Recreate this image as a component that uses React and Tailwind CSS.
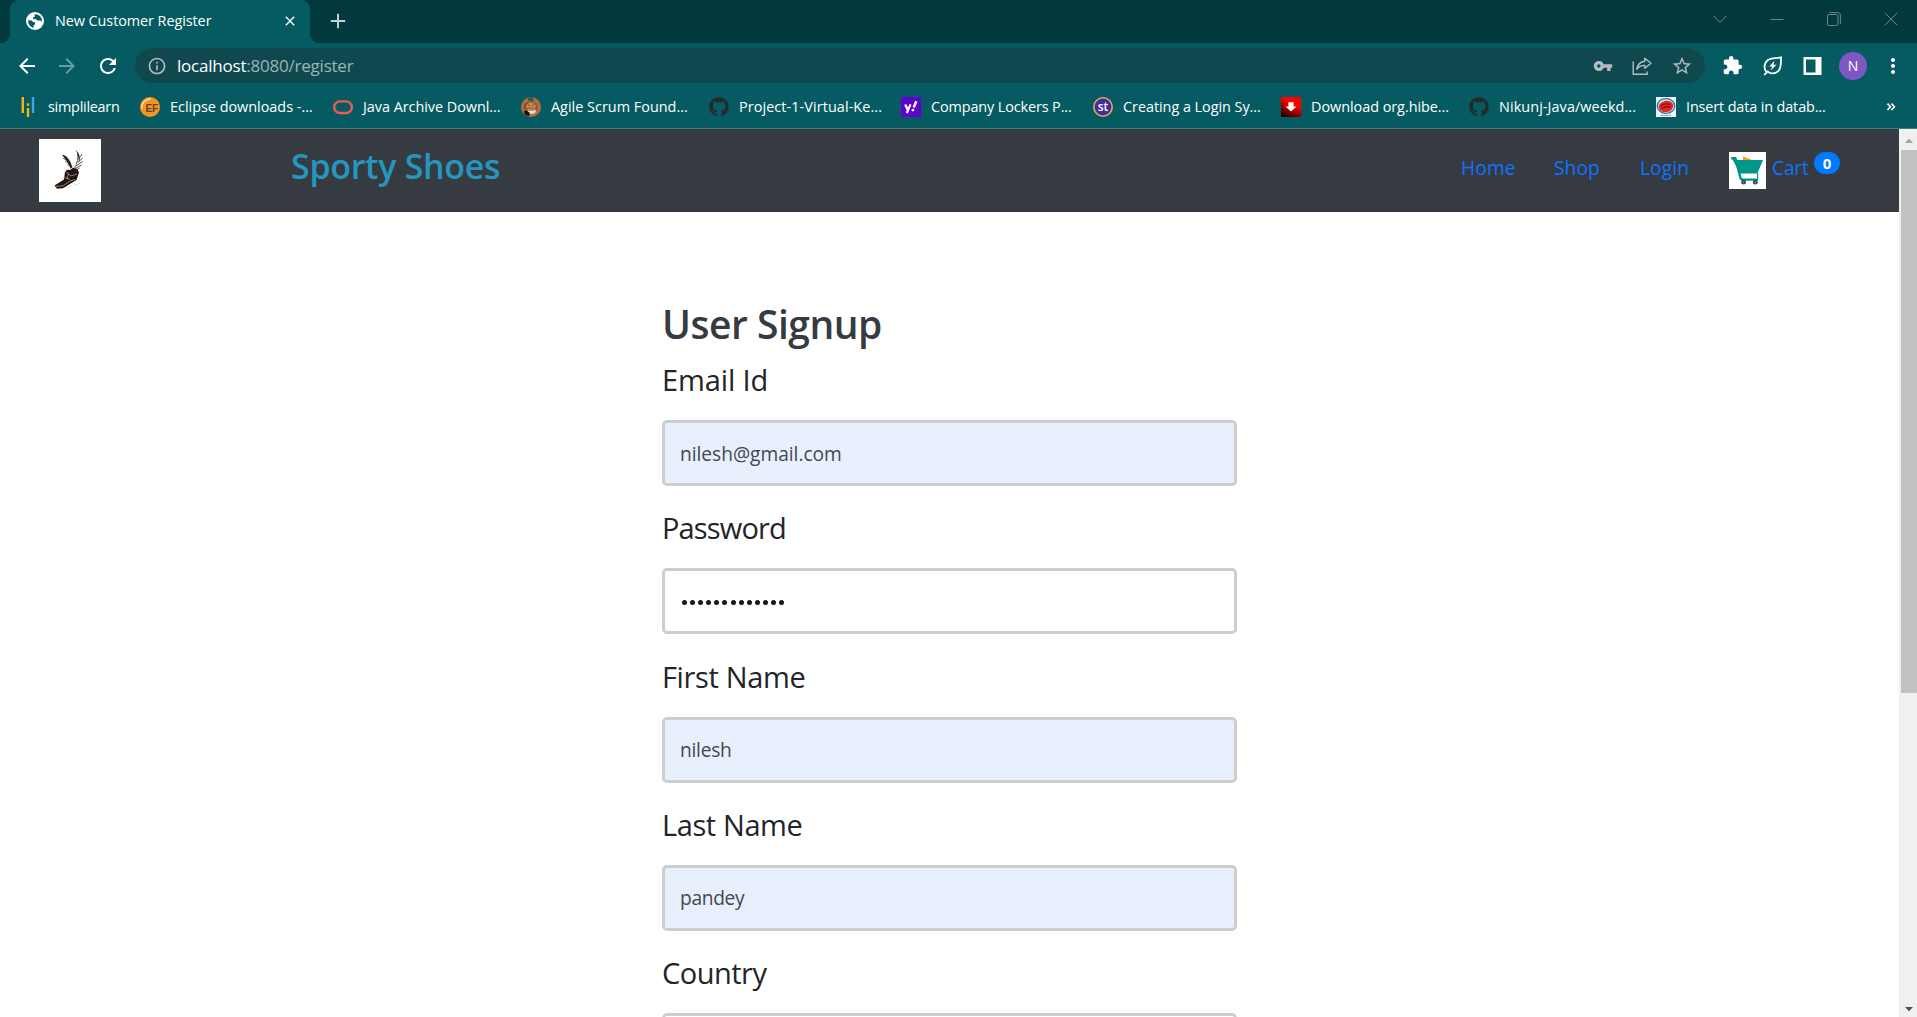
import React from 'react';
import { MdArrowBack, MdArrowForward, MdRefresh, MdInfoOutline, MdVpnKey, MdStarBorder, MdExtension, MdClose, MdMoreVert } from 'react-icons/md';
import { FaGithub } from 'react-icons/fa';

function GlobeIcon() {
  return (
    <svg viewBox="0 0 18 18" className="size-[18px]">
      <circle cx="9" cy="9" r="9" fill="#fff" />
      <path d="M2.2 8.2 L5.6 8.6 L7 10 L9 10.2 L9 12.6 L7.6 13.2 L7.5 16 A7.2 7.2 0 0 1 2.2 8.2Z" fill="#055b61" />
      <path d="M8.6 2.3 L11.4 2.5 A7 7 0 0 1 15.8 10 L14.2 8.6 L11.6 8.4 L10 7.2 L7.2 7 L7 5.4 L8.9 4.6Z" fill="#055b61" />
    </svg>
  );
}

function SimplilearnIcon() {
  return (
    <svg viewBox="0 0 20 20" className="size-5">
      <path d="M4.8 0V16M10 11V20" stroke="#f5b50a" strokeWidth="2.4" />
      <path d="M10 6.3V8.8" stroke="#f5b50a" strokeWidth="2.4" />
      <path d="M15 0V16" stroke="#38a9e8" strokeWidth="2.4" />
    </svg>
  );
}

function EclipseIcon() {
  return (
    <svg viewBox="0 0 20 20" className="size-5">
      <circle cx="10" cy="10" r="10" fill="#f7931e" />
      <path d="M2 12A8.3 8.3 0 0 1 11 2" stroke="#fdd7a6" strokeWidth="1.4" fill="none" />
      <text x="5.4" y="14.6" fontSize="10" fontWeight="700" fontFamily="Liberation Sans, sans-serif" fill="#5b4430">EF</text>
    </svg>
  );
}

function OracleIcon() {
  return (
    <svg viewBox="0 0 20 20" className="size-5">
      <rect x="1.2" y="4.4" width="17.6" height="11.6" rx="5.8" fill="none" stroke="#ef5a4c" strokeWidth="2.4" />
    </svg>
  );
}

function ScrumIcon() {
  return (
    <svg viewBox="0 0 20 20" className="size-5">
      <circle cx="10" cy="10" r="10" fill="#b06f3c" />
      <path d="M6.2 1.2L8.2 4.4H12.6L12 .6Q9 -.2 6.2 1.2Z" fill="#2d5a55" />
      <path d="M3.2 12.5C1.5 8 4 5.5 6.5 4.6L8 5.6L12.5 5.2L15 6.2C17 9 17 12 15.5 14Z" fill="#8d5430" />
      <ellipse cx="10" cy="9.4" rx="4.6" ry="3.6" fill="#c98a57" />
      <path d="M7 8.2H9M11 8.2H13M7.5 10.7Q10 12 12.6 10.7" stroke="#7a4526" strokeWidth="0.9" fill="none" />
      <path d="M5.5 12.8Q10 14.8 15 12.5L14 16.2L8.6 17.2Z" fill="#e9dfd2" />
      <path d="M2.8 14.4L5.5 13L9 16.2L8 19L4.4 18Z" fill="#15130f" />
    </svg>
  );
}

function YahooIcon() {
  return (
    <svg viewBox="0 0 20 20" className="size-5">
      <rect width="20" height="20" fill="#5f01d1" />
      <path d="M4.2 7.4L6.8 13M9.5 7.4L5.8 16" stroke="#fff" strokeWidth="2.3" />
      <path d="M15.3 4.3L12.7 10.6" stroke="#fff" strokeWidth="2.5" />
      <circle cx="11.9" cy="13.1" r="1.4" fill="#fff" />
    </svg>
  );
}

function StIcon() {
  return (
    <svg viewBox="0 0 20 20" className="size-5">
      <circle cx="10" cy="10" r="9.2" fill="#3f2da5" stroke="#eda84c" strokeWidth="1.6" />
      <text x="10" y="13.9" textAnchor="middle" fontSize="12" fontWeight="600" fontFamily="Open Sans, sans-serif" fill="#fff">st</text>
    </svg>
  );
}

function DownloadIcon() {
  return (
    <svg viewBox="0 0 20 20" className="size-5">
      <defs>
        <linearGradient id="redFade" x1="0.15" y1="1" x2="0.5" y2="0.3">
          <stop offset="0" stopColor="#120000" />
          <stop offset="1" stopColor="#ff0000" />
        </linearGradient>
      </defs>
      <rect width="20" height="20" fill="url(#redFade)" />
      <path d="M7.4 5.3H12.6V9.4H15.6L10 14.6L4.4 9.4H7.4Z" fill="#fff" />
    </svg>
  );
}

function RoundLogoIcon() {
  return (
    <svg viewBox="0 0 20 20" className="size-5">
      <rect width="20" height="20" fill="#f4f6fa" />
      <ellipse cx="10" cy="9" rx="8.8" ry="7.4" fill="#d7e6f5" stroke="#2a6fbd" strokeWidth="1.3" />
      <ellipse cx="10" cy="9.4" rx="7.4" ry="5.6" fill="#e02a1e" transform="rotate(-10 10 9.4)" />
      <path d="M5 9Q9 5.4 14 7.6M6 11.5Q10 8.6 14.6 10.4" stroke="#7b0f0c" strokeWidth="1.2" fill="none" />
      <path d="M4.5 18.4H15.5" stroke="#7a7f86" strokeWidth="1" strokeDasharray="2 0.7" />
    </svg>
  );
}

function ShareIcon() {
  return (
    <svg viewBox="0 0 20 20" className="size-5" fill="none" stroke="#b5bcbf" strokeWidth="1.4">
      <path d="M1.2 5.5V18.3H15.2V15.5" />
      <path d="M12.8 2.2L19 7.2L12.8 12.3V9.4Q8 9.2 4.8 13.2Q6 6 12.8 5.2Z" strokeLinejoin="round" />
    </svg>
  );
}

function LeafIcon() {
  return (
    <svg viewBox="0 0 20 20" className="size-5" fill="none" stroke="#fff" strokeWidth="1.8">
      <path d="M3.4 16.2C0.5 12.5 1 7 4.6 4.2C8 1.6 13.5 2.6 18 1.4C18 6 18.6 12 15 15.4C12 18 7.5 18.2 4.8 15.6L1.2 18.8" />
      <path d="M11.6 4.8L6.2 10.4H9.2L7.6 14.6L13.6 8.8H10.4Z" fill="#fff" stroke="none" />
    </svg>
  );
}

function ShoeLogo() {
  return (
    <svg viewBox="0 0 62 63" className="h-[63px] w-[62px] bg-white">
      <path d="M15.5 46.5L25 40.5L26 33L28 30.8L31 31L34 28.8L38.5 30L40 33.5L37.5 41L30 45.5L24 49.2L18 49.8Z" fill="#20140d" />
      <path d="M16.5 47.5L24 46.8L31 42L36 40.5M27 33L32 37L38 35M25.5 38.5L31 40.5M29.5 34.5L28 40" stroke="#a79d92" strokeWidth="0.8" fill="none" />
      <path d="M26 49Q36 46.5 42.5 43.6Q38 46.8 30 47.2Z" fill="#b5b1ac" />
      <path d="M22.8 15.6Q30.5 17 33.4 28.5L31.6 29.5Q28.5 22 22.8 15.6Z" fill="#2b1d14" />
      <path d="M24 19L28 21.6M26 22L30 24.6M28.5 25.5L32 27.4" stroke="#4d4239" strokeWidth="0.8" fill="none" />
      <path d="M36.6 10.6Q42.8 17 40 24Q39.8 16 36.6 10.6Z" fill="#20140d" />
      <path d="M38.4 15Q40 21 35.5 29.4M43 15L39.6 20M43.8 18.8L38.6 23.6M43.8 22.4L37.4 26.8M42.4 26L36.4 29.6M40.6 29L37 31" stroke="#4d4239" strokeWidth="0.9" fill="none" />
    </svg>
  );
}

function CartIcon() {
  return (
    <svg viewBox="0 0 37 37" className="size-[37px] bg-white">
      <path d="M14 4.6L22.5 7.4L20 9H14Z" fill="#f9a01b" />
      <path d="M2.2 6.3H6.4L11.4 25.6Q12 27.6 14 27.6H28.5" stroke="#009688" strokeWidth="2.4" fill="none" strokeLinejoin="round" />
      <path d="M2.2 5L6.5 5L7.8 8H34L28.4 21.4L11 21.4Z" fill="#009688" />
      <path d="M12.4 23.2H28V25.4H12.8Z" fill="#fff" />
      <path d="M28.6 21V28.4" stroke="#009688" strokeWidth="1.2" />
      <circle cx="14.6" cy="30.2" r="2.4" fill="#37474f" />
      <circle cx="26.3" cy="30.2" r="2.4" fill="#37474f" />
      <circle cx="14.6" cy="30.2" r="0.8" fill="#90a4ae" />
      <circle cx="26.3" cy="30.2" r="0.8" fill="#90a4ae" />
    </svg>
  );
}

function WindowControls() {
  return (
    <div className="mr-[19px] flex h-[37px] items-center gap-[43px] text-[#6a8b8e]">
      <svg viewBox="0 0 14 14" className="size-3.5" fill="none" stroke="currentColor"><path d="M.5 3.8L7 10.3L13.5 3.8" /></svg>
      <svg viewBox="0 0 14 14" className="size-3.5" fill="none" stroke="currentColor"><path d="M.5 7.5H13.5" /></svg>
      <svg viewBox="0 0 14 14" className="size-3.5" fill="none" stroke="currentColor">
        <rect x=".5" y="2.5" width="10.5" height="11" rx="1.5" />
        <path d="M2.5 .6H11Q13.4 .8 13.4 3V12" />
      </svg>
      <svg viewBox="0 0 14 14" className="size-3.5" fill="none" stroke="currentColor"><path d="M.8 .8L13.2 13.2M13.2 .8L.8 13.2" /></svg>
    </div>
  );
}

function TabStrip() {
  return (
    <div className="flex h-[43px] shrink-0 justify-between bg-[#02393e]">
      <div className="flex">
        <div className="w-[10px] bg-[#055b61]">
          <div className="h-full rounded-br-[9px] bg-[#02393e]" />
        </div>
        <div className="flex w-[300px] items-center rounded-t-[9px] bg-[#055b61] pr-[12px] pb-px pl-4">
          <GlobeIcon />
          <span className="mb-px ml-[11px] grow text-[14.4px] leading-5 tracking-[-0.06px] text-white">New Customer Register</span>
          <MdClose className="size-4 text-white" />
        </div>
        <div className="w-[10px] bg-[#055b61]">
          <div className="h-full rounded-bl-[9px] bg-[#02393e]" />
        </div>
        <svg viewBox="0 0 16 16" className="mt-[13px] ml-[10px] size-4"><path d="M8 .8V15.2M.8 8H15.2" stroke="#c3d0d1" strokeWidth="2" /></svg>
      </div>
      <WindowControls />
    </div>
  );
}

function Toolbar() {
  return (
    <div className="flex h-[43px] shrink-0 items-center bg-[#055b61] pt-[2px] pl-[15px] text-white">
      <div className="flex w-[120px] gap-4">
        <MdArrowBack className="size-6" />
        <MdArrowForward className="size-6 opacity-40" />
        <MdRefresh className="ml-px size-6" />
      </div>
      <div className="flex h-[35px] w-[1570px] items-center rounded-full bg-[#0f494f] pr-3 pl-3">
        <MdInfoOutline className="size-5 text-[#b5bcbf]" />
        <div className="mt-px ml-[10px] grow text-[17px] leading-6 tracking-[-0.22px] text-[#9db4b6]">
          <span className="text-white">localhost</span>:8080/register
        </div>
        <div className="flex items-center gap-[19px] text-[#b5bcbf]">
          <MdVpnKey className="size-5" />
          <ShareIcon />
          <MdStarBorder className="size-[22px]" />
        </div>
      </div>
      <div className="ml-[17px] flex items-center gap-5">
        <MdExtension className="size-[21px]" />
        <LeafIcon />
        <svg viewBox="0 0 18 18" className="h-[18px] w-[19px]"><path d="M1.25 1.25H16.75V16.75H1.25Z" fill="none" stroke="#fff" strokeWidth="2.5" /><path d="M12 1H17.5V17H12Z" fill="#fff" /></svg>
      </div>
      <div className="ml-[17px] flex size-7 items-center justify-center rounded-full bg-[#7e57c2] text-[14px] text-white">N</div>
      <MdMoreVert className="ml-[14px] size-6" />
    </div>
  );
}

const github = <FaGithub className="size-5 text-[#24292f]" />;

const bookmarks = [
  { label: 'simplilearn', icon: <SimplilearnIcon />, box: 'w-[122px]', spacing: 'tracking-[-0.247px] -ml-px' },
  { label: 'Eclipse downloads -...', icon: <EclipseIcon />, box: 'w-[193px]', spacing: '-ml-px' },
  { label: 'Java Archive Downl...', icon: <OracleIcon />, box: 'w-[188px]', spacing: 'tracking-[-0.03px] -ml-px' },
  { label: 'Agile Scrum Found...', icon: <ScrumIcon />, box: 'w-[188px]', spacing: 'tracking-[0.018px] -ml-px' },
  { label: 'Project-1-Virtual-Ke...', icon: github, box: 'w-[192px]', spacing: 'tracking-[0.09px] -ml-px' },
  { label: 'Company Lockers P...', icon: <YahooIcon />, box: 'w-[192px]', spacing: 'tracking-[-0.106px] -ml-px' },
  { label: 'Creating a Login Sy...', icon: <StIcon />, box: 'w-[188px]', spacing: 'tracking-[-0.03px] -ml-px' },
  { label: 'Download org.hibe...', icon: <DownloadIcon />, box: 'w-[188px]', spacing: 'tracking-[-0.03px] -ml-px' },
  { label: 'Nikunj-Java/weekd...', icon: github, box: 'w-[187px]', spacing: 'tracking-[0.09px] -ml-px' },
  { label: 'Insert data in datab...', icon: <RoundLogoIcon />, box: 'w-[230px]', spacing: 'tracking-[-0.122px] -ml-px' },
];

function BookmarksBar() {
  return (
    <div className="flex h-[43px] shrink-0 items-center border-b border-[#3d7d82] bg-[#055b61] pb-px pl-[18px] text-white">
      {bookmarks.map((b) => (
        <div key={b.label} className={`flex shrink-0 items-center gap-[11px] text-[14.4px] leading-5 whitespace-nowrap ${b.box}`}>
          {b.icon}
          <span className={b.spacing}>{b.label}</span>
        </div>
      ))}
      <svg viewBox="0 0 10 10" className="size-[10px]" fill="none" stroke="#fff" strokeWidth="1.7"><path d="M1.5 1.6L4.4 4.8L1.5 8M5.5 1.6L8.4 4.8L5.5 8" /></svg>
    </div>
  );
}

function NavBar() {
  return (
    <div className="flex h-[83px] bg-[#363a41] text-[19.2px] leading-7 text-[#0f73ff]">
      <div className="mt-[10px] ml-[39px]"><ShoeLogo /></div>
      <div className="mt-[16px] ml-[190px] grow text-[34px] leading-[42px] font-semibold tracking-[-0.3px] text-[#2596be]">Sporty Shoes</div>
      <div className="mt-[25px] flex">
        <span className="w-[93px] tracking-[0.1px]">Home</span>
        <span className="w-[86px] tracking-[0.05px]">Shop</span>
        <span className="w-[89px] tracking-[0.1px]">Login</span>
      </div>
      <div className="mt-[23px]"><CartIcon /></div>
      <span className="mt-[25px] ml-[6px] w-[42px] tracking-[-0.2px]">Cart</span>
      <span className="mt-[23px] mr-[59px] flex h-[22px] w-[26px] items-center justify-center rounded-full bg-[#007bff] text-[15px] font-bold text-white">0</span>
    </div>
  );
}

const fields = [
  { label: 'Email Id', value: 'nilesh@gmail.com', fit: 'tracking-[-0.12px]', valueFit: 'tracking-[-0.04px]' },
  { label: 'Password', value: '', dots: 13, fit: 'tracking-[-0.85px]' },
  { label: 'First Name', value: 'nilesh', fit: 'tracking-[-0.35px]', valueFit: 'tracking-[-0.27px]' },
  { label: 'Last Name', value: 'pandey', fit: 'tracking-[-0.4px]', valueFit: 'tracking-[-0.33px]' },
  { label: 'Country', value: '', fit: 'tracking-[-0.5px]' },
];

function Field({ field }) {
  return (
    <div className="mb-[20.3px]">
      <div className={`mb-[18px] text-[29px] leading-[44px] text-[#212529] ${field.fit}`}>{field.label}</div>
      <div className={`flex h-[66px] items-center rounded-[5px] border-3 border-[#cecece] px-[15px] pt-[2px] text-[19.2px] text-[#43484e] ${field.value ? 'bg-[#e8f0fe]' : 'bg-white'}`}>
        {field.dots ? (
          <div className="ml-[2px] flex gap-[3.1px]">
            {Array.from({ length: field.dots }, (_, i) => <i key={i} className="size-[5px] rounded-full bg-[#16181b]" />)}
          </div>
        ) : (
          <span className={field.valueFit}>{field.value}</span>
        )}
      </div>
    </div>
  );
}

function Scrollbar() {
  return (
    <div className="flex w-[18px] flex-col items-center justify-between bg-[#f0f0f0]">
      <div className="flex flex-col items-end self-stretch">
        <svg viewBox="0 0 18 21" className="h-[21px] w-[18px]"><path d="M6 14L10 9.5L14 14Z" fill="#a3a3a3" /></svg>
        <div className="h-[543px] w-4 bg-[#c1c1c1]" />
      </div>
      <svg viewBox="0 0 18 18" className="size-[18px]"><path d="M6 8L10 12.2L14 8Z" fill="#505050" /></svg>
    </div>
  );
}

export default function App() {
  return (
    <div className="flex h-[1017px] w-[1917px] flex-col overflow-hidden bg-white font-['Open_Sans',sans-serif]">
      <TabStrip />
      <Toolbar />
      <BookmarksBar />
      <div className="flex min-h-0 flex-1">
        <div className="grow overflow-hidden">
          <NavBar />
          <div className="mt-[88px] ml-[662px] w-[575px]">
            <h2 className="mb-[10px] text-[39px] leading-[48px] font-semibold tracking-[-0.48px] text-[#363a41]">User Signup</h2>
            {fields.map((f) => <Field key={f.label} field={f} />)}
          </div>
        </div>
        <Scrollbar />
      </div>
    </div>
  );
}
